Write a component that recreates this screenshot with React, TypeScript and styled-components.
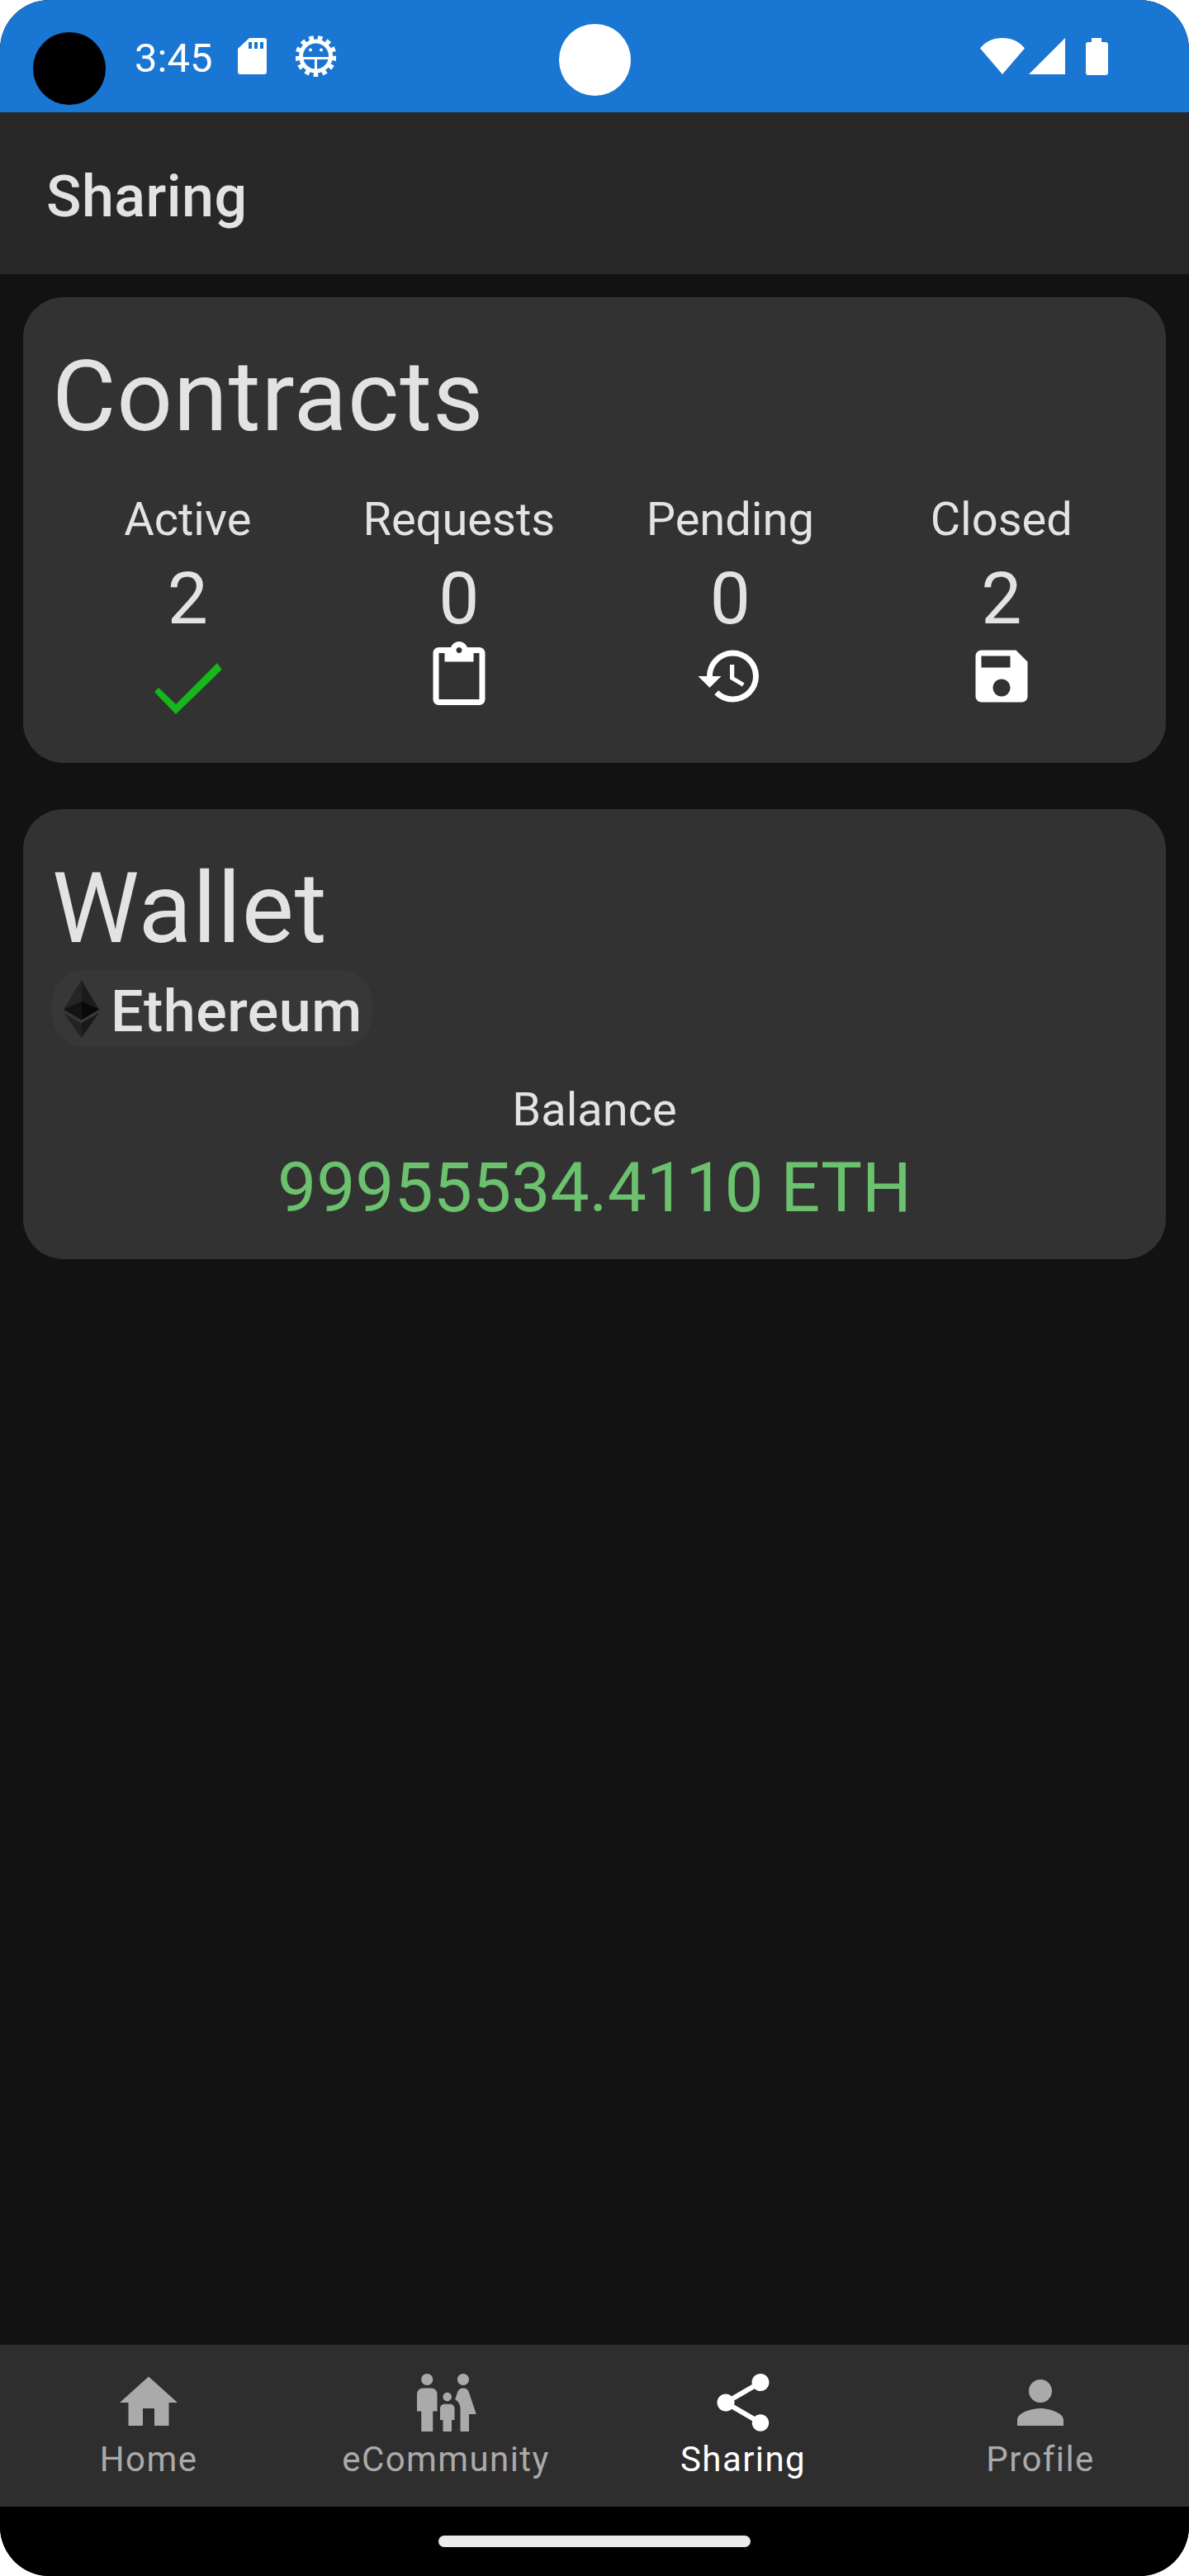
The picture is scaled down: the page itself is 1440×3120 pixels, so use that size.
import React from 'react'
import styled, { createGlobalStyle } from 'styled-components'
import {
  MdContentPaste,
  MdFamilyRestroom,
  MdHistory,
  MdHome,
  MdPerson,
  MdSave,
  MdShare,
} from 'react-icons/md'

const GlobalStyle = createGlobalStyle`
  html, body {
    margin: 0;
    padding: 0;
    background: #fff;
  }
  * {
    box-sizing: border-box;
  }
`

function CheckIcon() {
  return (
    <svg width="112" height="112" viewBox="0 0 112 112" fill="#14b81a">
      <polygon points="92,26 97.600,34 42,88 16,61 21,56 42,76" />
    </svg>
  )
}

const stats = [
  { label: 'Active', value: 2, icon: <CheckIcon /> },
  { label: 'Requests', value: 0, icon: <MdContentPaste size={84} color="#fff" /> },
  { label: 'Pending', value: 0, icon: <MdHistory size={84} color="#fff" /> },
  { label: 'Closed', value: 2, icon: <MdSave size={84} color="#fff" /> },
]

const tabs = [
  { label: 'Home', icon: <MdHome size={84} /> },
  { label: 'eCommunity', icon: <MdFamilyRestroom size={84} /> },
  { label: 'Sharing', icon: <MdShare size={84} />, active: true },
  { label: 'Profile', icon: <MdPerson size={84} /> },
]

function SdCardIcon() {
  return (
    <svg width="35" height="44" viewBox="0 0 35 44" fill="#fff">
      <path
        d="M14 0h18a3 3 0 0 1 3 3v38a3 3 0 0 1-3 3H3a3 3 0 0 1-3-3V13zM13 5v8h4V5zm7 0v8h4V5zm7 0v8h4V5z"
        fillRule="evenodd"
      />
    </svg>
  )
}

function AdbIcon() {
  return (
    <svg width="49" height="50" viewBox="0 0 49 50" fill="none" stroke="#fff">
      <circle cx="24.500" cy="25" r="18" strokeWidth="5" />
      <circle cx="24.500" cy="25" r="22.500" strokeWidth="5" strokeDasharray="5.600 5.180" />
      <path d="M6 27.500h37M24.500 27.500v17" strokeWidth="3" />
      <circle cx="18" cy="17.500" r="2" fill="#fff" stroke="none" />
      <circle cx="31" cy="17.500" r="2" fill="#fff" stroke="none" />
    </svg>
  )
}

function WifiIcon() {
  return (
    <svg width="54" height="44" viewBox="0 0 54 44" fill="#fff">
      <path d="M0 12.500C6 4.500 16 0 27 0s21 4.500 27 12.500L27 44z" />
    </svg>
  )
}

function SignalIcon() {
  return (
    <svg width="44" height="44" viewBox="0 0 44 44" fill="#fff">
      <path d="M44 0v44H0z" />
    </svg>
  )
}

function BatteryIcon() {
  return (
    <svg width="27" height="45" viewBox="0 0 27 45" fill="#fff">
      <path d="M7 0h12v5h5a3 3 0 0 1 3 3v34a3 3 0 0 1-3 3H3a3 3 0 0 1-3-3V8a3 3 0 0 1 3-3h4z" />
    </svg>
  )
}

function EthereumLogo() {
  return (
    <svg width="43" height="70" viewBox="0 0 256 417">
      <polygon fill="#1b1b1b" points="128,0 256,212 128,288" />
      <polygon fill="#252525" points="128,0 0,212 128,288" />
      <polygon fill="#191919" points="128,312 256,237 128,417" />
      <polygon fill="#232323" points="128,417 128,312 0,237" />
      <polygon fill="#080808" points="128,288 256,212 128,154" />
      <polygon fill="#131313" points="0,212 128,288 128,154" />
    </svg>
  )
}

export default function App() {
  return (
    <Phone>
      <GlobalStyle />
      <StatusBar>
        <Camera />
        <Dot />
        <StatusLeft>
          <Clock>3:45</Clock>
          <SdCardIcon />
          <AdbIcon />
        </StatusLeft>
        <StatusRight>
          <WifiIcon />
          <SignalIcon />
          <BatterySlot>
            <BatteryIcon />
          </BatterySlot>
        </StatusRight>
      </StatusBar>

      <Header>
        <HeaderTitle>Sharing</HeaderTitle>
      </Header>

      <Main>
        <Card>
          <CardTitle>Contracts</CardTitle>
          <StatsRow>
            {stats.map((s) => (
              <Stat key={s.label}>
                <StatLabel>{s.label}</StatLabel>
                <StatValue>{s.value}</StatValue>
                {s.icon}
              </Stat>
            ))}
          </StatsRow>
        </Card>

        <Card>
          <CardTitle>Wallet</CardTitle>
          <Chip>
            <EthereumLogo />
            <ChipText>Ethereum</ChipText>
          </Chip>
          <Balance>
            <BalanceLabel>Balance</BalanceLabel>
            <BalanceValue>99955534.4110 ETH</BalanceValue>
          </Balance>
        </Card>
      </Main>

      <TabBar>
        {tabs.map((t) => (
          <Tab key={t.label} $active={t.active}>
            {t.icon}
            <TabLabel>{t.label}</TabLabel>
          </Tab>
        ))}
      </TabBar>

      <GestureBar>
        <HomeIndicator />
      </GestureBar>
    </Phone>
  )
}

const Phone = styled.div`
  position: relative;
  width: 1440px;
  height: 3120px;
  display: flex;
  flex-direction: column;
  overflow: hidden;
  border-radius: 60px;
  background: #121212;
  font-family: Roboto, 'Noto Sans', sans-serif;
`

const StatusBar = styled.div`
  height: 136px;
  flex-shrink: 0;
  display: flex;
  align-items: center;
  justify-content: space-between;
  padding: 0 98px 0 163px;
  background: #1976d2;
`

const Camera = styled.div`
  position: absolute;
  top: 39px;
  left: 40px;
  width: 88px;
  height: 88px;
  border-radius: 50%;
  background: #000;
`

const Dot = styled.div`
  position: absolute;
  top: 29px;
  left: 677px;
  width: 87px;
  height: 87px;
  border-radius: 50%;
  background: #fff;
`

const StatusLeft = styled.div`
  display: flex;
  align-items: center;
  gap: 35px;
`

const Clock = styled.span`
  width: 90px;
  margin-top: 5px;
  font-size: 49px;
  line-height: 56px;
  color: #fff;
`

const StatusRight = styled.div`
  display: flex;
  align-items: center;
  gap: 5px;
`

const BatterySlot = styled.div`
  display: flex;
  margin-left: 20px;
`

const Header = styled.header`
  height: 196px;
  flex-shrink: 0;
  display: flex;
  align-items: center;
  padding: 8px 56px 0;
  background: #282828;
`

const HeaderTitle = styled.h1`
  margin: 0;
  font-size: 70px;
  font-weight: 500;
  letter-spacing: 0.500px;
  color: #e3e3e3;
`

const Main = styled.main`
  flex: 1;
  display: flex;
  flex-direction: column;
  gap: 56px;
  padding: 28px;
`

const Card = styled.section`
  display: flex;
  flex-direction: column;
  padding: 51px 35px 35px;
  border-radius: 49px;
  background: #323232;
`

const CardTitle = styled.h2`
  margin: 0;
  font-size: 119px;
  font-weight: 400;
  line-height: 140px;
  letter-spacing: 0.900px;
  color: #e3e3e3;
`

const StatsRow = styled.div`
  display: grid;
  grid-template-columns: repeat(4, 1fr);
  margin-top: 45px;
`

const Stat = styled.div`
  display: flex;
  flex-direction: column;
  align-items: center;
`

const StatLabel = styled.div`
  font-size: 56px;
  line-height: 66px;
  color: #e3e3e3;
`

const StatValue = styled.div`
  margin-top: 11px;
  font-size: 87.500px;
  line-height: 104px;
  color: #e3e3e3;
`

const Chip = styled.div`
  align-self: flex-start;
  display: flex;
  align-items: center;
  gap: 14px;
  height: 93px;
  margin-top: 4px;
  padding: 0 12px 0 14px;
  border-radius: 38px;
  background: #373737;
`

const ChipText = styled.span`
  margin-top: 6px;
  font-size: 70px;
  font-weight: 500;
  letter-spacing: 0.500px;
  color: #e3e3e3;
`

const Balance = styled.div`
  display: flex;
  flex-direction: column;
  align-items: center;
  margin-top: 43px;
`

const BalanceLabel = styled.div`
  font-size: 56px;
  line-height: 66px;
  color: #e3e3e3;
`

const BalanceValue = styled.div`
  margin-top: 10px;
  font-size: 84px;
  line-height: 103px;
  color: #6cc16f;
`

const TabBar = styled.nav`
  height: 196px;
  flex-shrink: 0;
  display: grid;
  grid-template-columns: repeat(4, 1fr);
  background: #2e2e2e;
`

const Tab = styled.div<{ $active?: boolean }>`
  display: flex;
  flex-direction: column;
  align-items: center;
  padding-top: 28px;
  color: ${(p) => (p.$active ? '#fff' : '#aaaaaa')};
`

const TabLabel = styled.span`
  margin-top: 2px;
  font-size: 42px;
  line-height: 50px;
  letter-spacing: 1.400px;
`

const GestureBar = styled.div`
  height: 84px;
  flex-shrink: 0;
  display: flex;
  justify-content: center;
  padding-top: 35px;
  background: #000;
`

const HomeIndicator = styled.div`
  width: 378px;
  height: 14px;
  border-radius: 7px;
  background: #eaeaea;
`
